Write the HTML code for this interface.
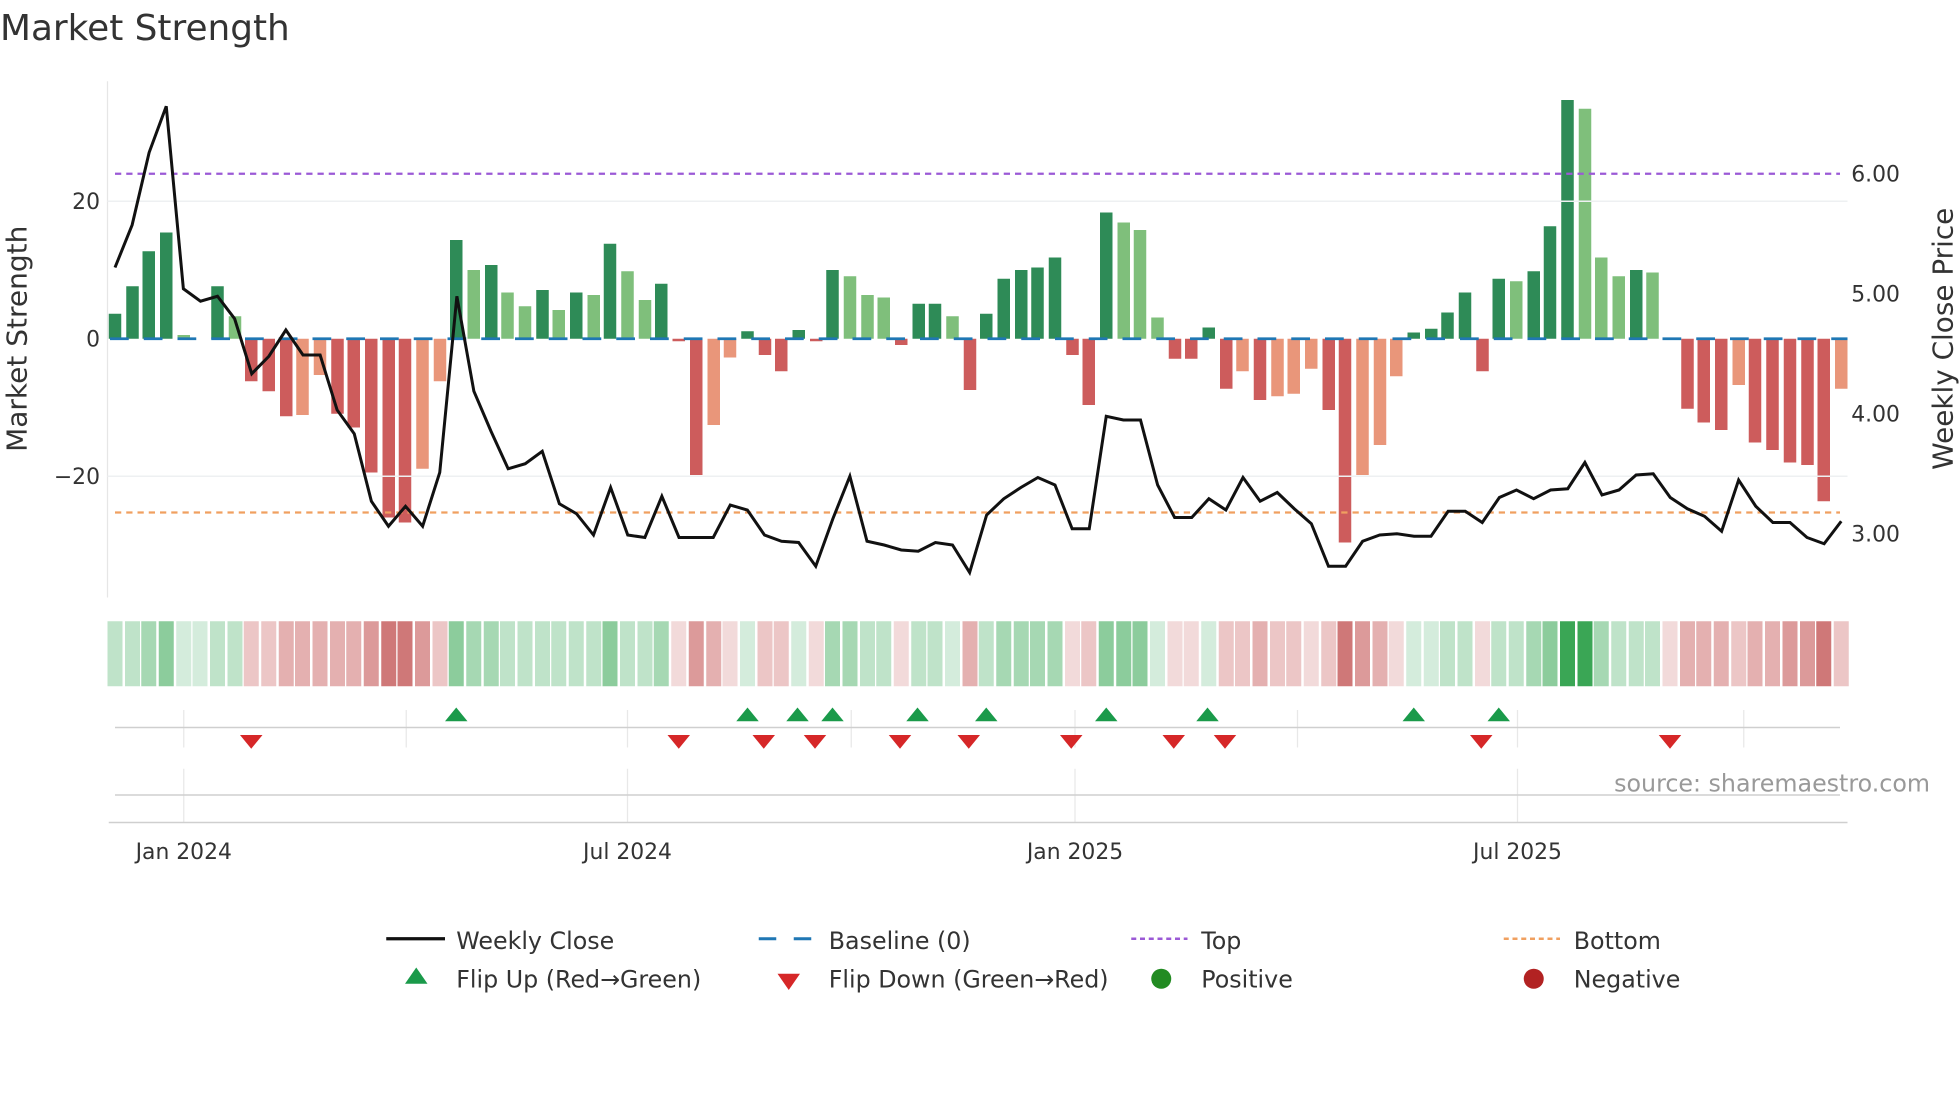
<!DOCTYPE html>
<html><head><meta charset="utf-8"><style>
html,body{margin:0;padding:0;background:#fff;width:1960px;height:1102px;overflow:hidden}
#w{position:absolute;left:0;top:0;width:1568px;height:882px;transform:scale(1.25);transform-origin:0 0}
svg{position:absolute;left:0;top:0;display:block}
text{font-family:"DejaVu Sans","Liberation Sans",sans-serif;fill:#333}
.row{position:absolute;left:85.16px;display:flex;width:1394.6px}
#bars{top:0;height:480px}
#bars b{position:relative;flex:0 0 13.673px;height:480px}
#bars i{position:absolute;left:1.84px;width:10px}
.d{background:#2e8b57}.l{background:#7fbf7b}.r{background:#cd5c5c}.s{background:#e9967a}
#heat{top:497px;height:52px}
#heat b{flex:0 0 13.673px;height:52px;position:relative}
#heat b:after{content:"";position:absolute;left:0.84px;width:12px;top:0;height:52px;background:inherit}
#heat b{background:none}
.g1:after{background:#d4ecdc!important}.g2:after{background:#bfe3c9!important}.g3:after{background:#a6d8b3!important}.g4:after{background:#8ccc9c!important}.g5:after{background:#3aa655!important}
.r1:after{background:#f2dada!important}.r2:after{background:#ecc6c6!important}.r3:after{background:#e4b0b0!important}.r4:after{background:#dc9a9a!important}.r5:after{background:#cf7878!important}
</style></head><body><div id="w">
<div class="row" id="bars">
<b><i class="d" style="top:251px;height:20px"></i></b>
<b><i class="d" style="top:229px;height:42px"></i></b>
<b><i class="d" style="top:201px;height:70px"></i></b>
<b><i class="d" style="top:186px;height:85px"></i></b>
<b><i class="l" style="top:268px;height:3px"></i></b>
<b></b>
<b><i class="d" style="top:229px;height:42px"></i></b>
<b><i class="l" style="top:253px;height:18px"></i></b>
<b><i class="r" style="top:271px;height:34px"></i></b>
<b><i class="r" style="top:271px;height:42px"></i></b>
<b><i class="r" style="top:271px;height:62px"></i></b>
<b><i class="s" style="top:271px;height:61px"></i></b>
<b><i class="s" style="top:271px;height:29px"></i></b>
<b><i class="r" style="top:271px;height:60px"></i></b>
<b><i class="r" style="top:271px;height:71px"></i></b>
<b><i class="r" style="top:271px;height:107px"></i></b>
<b><i class="r" style="top:271px;height:143px"></i></b>
<b><i class="r" style="top:271px;height:147px"></i></b>
<b><i class="s" style="top:271px;height:104px"></i></b>
<b><i class="s" style="top:271px;height:34px"></i></b>
<b><i class="d" style="top:192px;height:79px"></i></b>
<b><i class="l" style="top:216px;height:55px"></i></b>
<b><i class="d" style="top:212px;height:59px"></i></b>
<b><i class="l" style="top:234px;height:37px"></i></b>
<b><i class="l" style="top:245px;height:26px"></i></b>
<b><i class="d" style="top:232px;height:39px"></i></b>
<b><i class="l" style="top:248px;height:23px"></i></b>
<b><i class="d" style="top:234px;height:37px"></i></b>
<b><i class="l" style="top:236px;height:35px"></i></b>
<b><i class="d" style="top:195px;height:76px"></i></b>
<b><i class="l" style="top:217px;height:54px"></i></b>
<b><i class="l" style="top:240px;height:31px"></i></b>
<b><i class="d" style="top:227px;height:44px"></i></b>
<b><i class="r" style="top:271px;height:2px"></i></b>
<b><i class="r" style="top:271px;height:109px"></i></b>
<b><i class="s" style="top:271px;height:69px"></i></b>
<b><i class="s" style="top:271px;height:15px"></i></b>
<b><i class="d" style="top:265px;height:6px"></i></b>
<b><i class="r" style="top:271px;height:13px"></i></b>
<b><i class="r" style="top:271px;height:26px"></i></b>
<b><i class="d" style="top:264px;height:7px"></i></b>
<b><i class="r" style="top:271px;height:2px"></i></b>
<b><i class="d" style="top:216px;height:55px"></i></b>
<b><i class="l" style="top:221px;height:50px"></i></b>
<b><i class="l" style="top:236px;height:35px"></i></b>
<b><i class="l" style="top:238px;height:33px"></i></b>
<b><i class="r" style="top:271px;height:5px"></i></b>
<b><i class="d" style="top:243px;height:28px"></i></b>
<b><i class="d" style="top:243px;height:28px"></i></b>
<b><i class="l" style="top:253px;height:18px"></i></b>
<b><i class="r" style="top:271px;height:41px"></i></b>
<b><i class="d" style="top:251px;height:20px"></i></b>
<b><i class="d" style="top:223px;height:48px"></i></b>
<b><i class="d" style="top:216px;height:55px"></i></b>
<b><i class="d" style="top:214px;height:57px"></i></b>
<b><i class="d" style="top:206px;height:65px"></i></b>
<b><i class="r" style="top:271px;height:13px"></i></b>
<b><i class="r" style="top:271px;height:53px"></i></b>
<b><i class="d" style="top:170px;height:101px"></i></b>
<b><i class="l" style="top:178px;height:93px"></i></b>
<b><i class="l" style="top:184px;height:87px"></i></b>
<b><i class="l" style="top:254px;height:17px"></i></b>
<b><i class="r" style="top:271px;height:16px"></i></b>
<b><i class="r" style="top:271px;height:16px"></i></b>
<b><i class="d" style="top:262px;height:9px"></i></b>
<b><i class="r" style="top:271px;height:40px"></i></b>
<b><i class="s" style="top:271px;height:26px"></i></b>
<b><i class="r" style="top:271px;height:49px"></i></b>
<b><i class="s" style="top:271px;height:46px"></i></b>
<b><i class="s" style="top:271px;height:44px"></i></b>
<b><i class="s" style="top:271px;height:24px"></i></b>
<b><i class="r" style="top:271px;height:57px"></i></b>
<b><i class="r" style="top:271px;height:163px"></i></b>
<b><i class="s" style="top:271px;height:109px"></i></b>
<b><i class="s" style="top:271px;height:85px"></i></b>
<b><i class="s" style="top:271px;height:30px"></i></b>
<b><i class="d" style="top:266px;height:5px"></i></b>
<b><i class="d" style="top:263px;height:8px"></i></b>
<b><i class="d" style="top:250px;height:21px"></i></b>
<b><i class="d" style="top:234px;height:37px"></i></b>
<b><i class="r" style="top:271px;height:26px"></i></b>
<b><i class="d" style="top:223px;height:48px"></i></b>
<b><i class="l" style="top:225px;height:46px"></i></b>
<b><i class="d" style="top:217px;height:54px"></i></b>
<b><i class="d" style="top:181px;height:90px"></i></b>
<b><i class="d" style="top:80px;height:191px"></i></b>
<b><i class="l" style="top:87px;height:184px"></i></b>
<b><i class="l" style="top:206px;height:65px"></i></b>
<b><i class="l" style="top:221px;height:50px"></i></b>
<b><i class="d" style="top:216px;height:55px"></i></b>
<b><i class="l" style="top:218px;height:53px"></i></b>
<b></b>
<b><i class="r" style="top:271px;height:56px"></i></b>
<b><i class="r" style="top:271px;height:67px"></i></b>
<b><i class="r" style="top:271px;height:73px"></i></b>
<b><i class="s" style="top:271px;height:37px"></i></b>
<b><i class="r" style="top:271px;height:83px"></i></b>
<b><i class="r" style="top:271px;height:89px"></i></b>
<b><i class="r" style="top:271px;height:99px"></i></b>
<b><i class="r" style="top:271px;height:101px"></i></b>
<b><i class="r" style="top:271px;height:130px"></i></b>
<b><i class="s" style="top:271px;height:40px"></i></b>
</div>
<div class="row" id="heat">
<b class="g2"></b><b class="g2"></b><b class="g3"></b><b class="g4"></b><b class="g1"></b><b class="g1"></b><b class="g2"></b><b class="g2"></b><b class="r2"></b><b class="r2"></b>
<b class="r3"></b><b class="r3"></b><b class="r3"></b><b class="r3"></b><b class="r3"></b><b class="r4"></b><b class="r5"></b><b class="r5"></b><b class="r4"></b><b class="r2"></b>
<b class="g4"></b><b class="g3"></b><b class="g3"></b><b class="g2"></b><b class="g2"></b><b class="g2"></b><b class="g2"></b><b class="g2"></b><b class="g2"></b><b class="g4"></b>
<b class="g2"></b><b class="g2"></b><b class="g3"></b><b class="r1"></b><b class="r4"></b><b class="r3"></b><b class="r1"></b><b class="g1"></b><b class="r2"></b><b class="r2"></b>
<b class="g1"></b><b class="r1"></b><b class="g3"></b><b class="g3"></b><b class="g2"></b><b class="g2"></b><b class="r1"></b><b class="g2"></b><b class="g2"></b><b class="g1"></b>
<b class="r3"></b><b class="g2"></b><b class="g3"></b><b class="g3"></b><b class="g3"></b><b class="g3"></b><b class="r1"></b><b class="r2"></b><b class="g4"></b><b class="g4"></b>
<b class="g4"></b><b class="g1"></b><b class="r1"></b><b class="r1"></b><b class="g1"></b><b class="r2"></b><b class="r2"></b><b class="r3"></b><b class="r2"></b><b class="r2"></b>
<b class="r1"></b><b class="r2"></b><b class="r5"></b><b class="r4"></b><b class="r3"></b><b class="r1"></b><b class="g1"></b><b class="g1"></b><b class="g2"></b><b class="g2"></b>
<b class="r1"></b><b class="g2"></b><b class="g2"></b><b class="g3"></b><b class="g4"></b><b class="g5"></b><b class="g5"></b><b class="g3"></b><b class="g2"></b><b class="g2"></b>
<b class="g2"></b><b class="r1"></b><b class="r3"></b><b class="r3"></b><b class="r3"></b><b class="r2"></b><b class="r3"></b><b class="r3"></b><b class="r4"></b><b class="r4"></b>
<b class="r5"></b><b class="r2"></b>
</div>
<svg width="1568" height="882" viewBox="0 0 1568 882" xmlns="http://www.w3.org/2000/svg">
<text x="0" y="32" font-size="28.7">Market Strength</text>
<line x1="86" y1="65" x2="86" y2="478" stroke="#e6e6e6" stroke-width="1"/>
<line x1="86" y1="161" x2="1478" y2="161" stroke="#eef0f2" stroke-width="1.2"/>
<line x1="86" y1="381" x2="1478" y2="381" stroke="#eef0f2" stroke-width="1.2"/>
<line x1="88" y1="271" x2="1478" y2="271" stroke="#1f77b4" stroke-width="2.2" stroke-dasharray="15,12"/>
<line x1="92" y1="139" x2="1472" y2="139" stroke="#9b59d6" stroke-width="1.8" stroke-dasharray="5,4"/>
<line x1="92" y1="410" x2="1472" y2="410" stroke="#f0a060" stroke-width="1.8" stroke-dasharray="5,4"/>
<polyline fill="none" stroke="#111" stroke-width="2.4" points="92,214 105.7,180 119.3,122 133,85 146.7,231 160.4,241 174,237 187.7,255 201.4,299 215.1,285 228.7,264 242.4,284 256.1,284 269.7,328 283.4,347 297.1,401 310.8,421 324.4,405 338.1,421 351.8,378 365.5,237 379.1,313 392.8,345 406.5,375 420.2,371 433.8,361 447.5,403 461.2,411 474.8,428 488.5,390 502.2,428 515.9,430 529.5,397 543.2,430 556.9,430 570.6,430 584.2,404 597.9,408 611.6,428 625.2,433 638.9,434 652.6,453 666.3,415 679.9,381 693.6,433 707.3,436 721,440 734.6,441 748.3,434 762,436 775.7,458 789.3,412 803,399 816.7,390 830.3,382 844,388 857.7,423 871.4,423 885,333 898.7,336 912.4,336 926.1,388 939.7,414 953.4,414 967.1,399 980.7,408 994.4,382 1008.1,401 1021.8,394 1035.4,407 1049.1,419 1062.8,453 1076.5,453 1090.1,433 1103.8,428 1117.5,427 1131.2,429 1144.8,429 1158.5,409 1172.2,409 1185.8,418 1199.5,398 1213.2,392 1226.9,399 1240.5,392 1254.2,391 1267.9,370 1281.6,396 1295.2,392 1308.9,380 1322.6,379 1336.2,398 1349.9,407 1363.6,413 1377.3,425 1390.9,384 1404.6,405 1418.3,418 1432,418 1445.6,430 1459.3,435 1473,417"/>
<g font-size="17.5" text-anchor="end">
<text x="80" y="167">20</text><text x="80" y="277">0</text><text x="80" y="387">−20</text>
</g>
<g font-size="17.5">
<text x="1481" y="145">6.00</text><text x="1481" y="241">5.00</text><text x="1481" y="337">4.00</text><text x="1481" y="433">3.00</text>
</g>
<text transform="translate(21,271) rotate(-90)" font-size="22.4" text-anchor="middle">Market Strength</text>
<text transform="translate(1562,271) rotate(-90)" font-size="22.3" text-anchor="middle">Weekly Close Price</text>
<g stroke="#e8e8e8" stroke-width="1">
<line x1="147" y1="568" x2="147" y2="598"/><line x1="325" y1="568" x2="325" y2="598"/><line x1="502" y1="568" x2="502" y2="598"/><line x1="681" y1="568" x2="681" y2="598"/><line x1="860" y1="568" x2="860" y2="598"/><line x1="1038" y1="568" x2="1038" y2="598"/><line x1="1214" y1="568" x2="1214" y2="598"/><line x1="1395" y1="568" x2="1395" y2="598"/>
<line x1="147" y1="615" x2="147" y2="658"/><line x1="502" y1="615" x2="502" y2="658"/><line x1="860" y1="615" x2="860" y2="658"/><line x1="1214" y1="615" x2="1214" y2="658"/>
</g>
<line x1="92" y1="582" x2="1472" y2="582" stroke="#cfcfcf" stroke-width="1.2"/>
<line x1="92" y1="636" x2="1472" y2="636" stroke="#cfcfcf" stroke-width="1.2"/>
<line x1="87" y1="658" x2="1478" y2="658" stroke="#cfcfcf" stroke-width="1.2"/>
<g fill="#1a9a4a">
<polygon points="365,566 374,577 356,577"/><polygon points="598,566 607,577 589,577"/><polygon points="638,566 647,577 629,577"/><polygon points="666,566 675,577 657,577"/><polygon points="734,566 743,577 725,577"/><polygon points="789,566 798,577 780,577"/><polygon points="885,566 894,577 876,577"/><polygon points="966,566 975,577 957,577"/><polygon points="1131,566 1140,577 1122,577"/><polygon points="1199,566 1208,577 1190,577"/>
</g>
<g fill="#d62728">
<polygon points="192,588 210,588 201,599"/><polygon points="534,588 552,588 543,599"/><polygon points="602,588 620,588 611,599"/><polygon points="643,588 661,588 652,599"/><polygon points="711,588 729,588 720,599"/><polygon points="766,588 784,588 775,599"/><polygon points="848,588 866,588 857,599"/><polygon points="930,588 948,588 939,599"/><polygon points="971,588 989,588 980,599"/><polygon points="1176,588 1194,588 1185,599"/><polygon points="1327,588 1345,588 1336,599"/>
</g>
<text x="1544" y="633" font-size="19" text-anchor="end" style="fill:#999">source: sharemaestro.com</text>
<g font-size="17.5" text-anchor="middle">
<text x="147" y="687">Jan 2024</text><text x="502" y="687">Jul 2024</text><text x="860" y="687">Jan 2025</text><text x="1214" y="687">Jul 2025</text>
</g>
<g font-size="19">
<line x1="309" y1="751" x2="356" y2="751" stroke="#111" stroke-width="2.6"/>
<text x="365" y="759">Weekly Close</text>
<line x1="607" y1="751" x2="621" y2="751" stroke="#1f77b4" stroke-width="2.4"/><line x1="635" y1="751" x2="649" y2="751" stroke="#1f77b4" stroke-width="2.4"/>
<text x="663" y="759">Baseline (0)</text>
<line x1="905" y1="751" x2="950" y2="751" stroke="#9b59d6" stroke-width="2" stroke-dasharray="4,3"/>
<text x="961" y="759">Top</text>
<line x1="1203" y1="751" x2="1248" y2="751" stroke="#f0a060" stroke-width="2" stroke-dasharray="4,3"/>
<text x="1259" y="759">Bottom</text>
<polygon points="333,774 342,787 324,787" fill="#1a9a4a"/>
<text x="365" y="790">Flip Up (Red→Green)</text>
<polygon points="622,779 640,779 631,792" fill="#d62728"/>
<text x="663" y="790">Flip Down (Green→Red)</text>
<circle cx="929" cy="783" r="8" fill="#228b22"/>
<text x="961" y="790">Positive</text>
<circle cx="1227" cy="783" r="8" fill="#b22222"/>
<text x="1259" y="790">Negative</text>
</g>
</svg>
</div></body></html>
